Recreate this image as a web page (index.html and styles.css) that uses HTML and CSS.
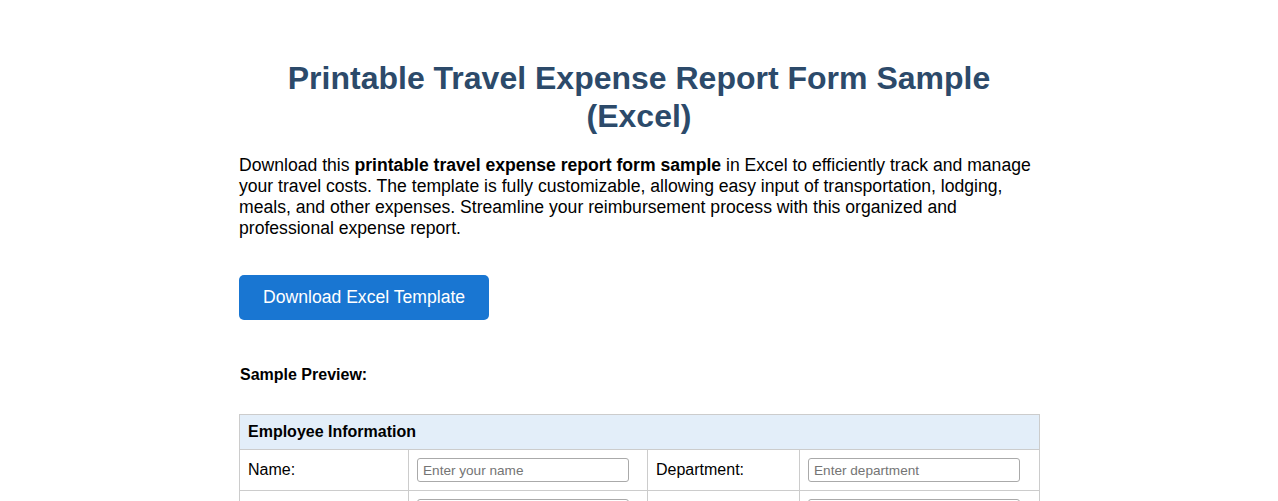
FILE: index.html
```html
<!DOCTYPE html>
<html lang="en">
<head>
<meta charset="utf-8">
<title>Printable Travel Expense Report Form Sample (Excel)</title>
<link rel="stylesheet" href="styles.css">
</head>
<body>
<main class="container">
  <h1 class="title">Printable Travel Expense Report Form Sample (Excel)</h1>
  <p class="intro">Download this <strong>printable travel expense report form sample</strong> in Excel to efficiently track and manage your travel costs. The template is fully customizable, allowing easy input of transportation, lodging, meals, and other expenses. Streamline your reimbursement process with this organized and professional expense report.</p>
  <a class="btn" href="#">Download Excel Template</a>
  <h3 class="preview-label">Sample Preview:</h3>
  <table class="sheet">
    <colgroup>
      <col class="c1"><col class="c2"><col class="c3"><col class="c4">
    </colgroup>
    <tr><th colspan="4" class="section">Employee Information</th></tr>
    <tr>
      <td>Name:</td><td><input class="field" type="text" placeholder="Enter your name"></td>
      <td>Department:</td><td><input class="field" type="text" placeholder="Enter department"></td>
    </tr>
    <tr>
      <td>Employee ID:</td><td><input class="field" type="text" placeholder="Enter ID"></td>
      <td>Manager:</td><td><input class="field" type="text" placeholder="Enter manager"></td>
    </tr>
  </table>
</main>
</body>
</html>
```
FILE: styles.css
```css
html, body { margin: 0; padding: 0; background: #fff; }
body { font-family: "Liberation Sans", Arial, sans-serif; color: #000; }
.container { width: 800px; margin: 0 auto; padding-top: 38px; }
.title { font-size: 32px; font-weight: bold; color: #2c4a6a; text-align: center; margin: 21px 0 20px; line-height: 38px; }
.intro { font-size: 17.6px; line-height: 21px; margin: 0 0 36px; }
.btn { display: inline-block; background: #1976d2; color: #fff; text-decoration: none; font-size: 17.6px; line-height: 21px; padding: 12px 24px; border-radius: 5px; }
.preview-label { font-size: 16px; font-weight: bold; margin: 46px 0 0 1px; }
.sheet { width: 800px; border-collapse: collapse; margin-top: 30px; table-layout: fixed; }
.c1 { width: 169px; } .c2 { width: 239px; } .c3 { width: 152px; } .c4 { width: 240px; }
.sheet th, .sheet td { border: 1px solid #ccc; padding: 8px; text-align: left; font-size: 16px; }
.section { background: #e3eef9; font-weight: bold; height: 18px; }
.field { width: 212px; height: 24px; box-sizing: border-box; border: 1px solid #aaa; border-radius: 3px; padding: 2px 5px; font-family: "Liberation Sans", Arial, sans-serif; font-size: 13.6px; }
.field::placeholder { color: #757575; }
```
